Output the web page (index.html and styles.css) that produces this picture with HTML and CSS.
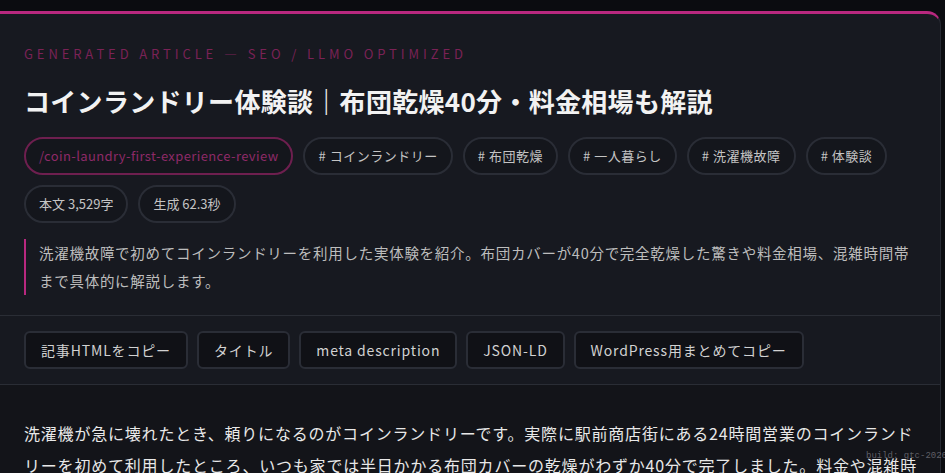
FILE: index.html
```html
<!DOCTYPE html>
<html lang="ja">
<head>
<meta charset="utf-8">
<title>Generated Article</title>
<link rel="stylesheet" href="styles.css">
</head>
<body>
<article class="card">
  <header class="head">
    <p class="eyebrow">GENERATED ARTICLE — SEO / LLMO OPTIMIZED</p>
    <h1 class="title">コインランドリー体験談｜布団乾燥40分・料金相場も解説</h1>
    <div class="chips">
      <span class="chip chip-slug">/coin-laundry-first-experience-review</span>
      <span class="chip"># コインランドリー</span>
      <span class="chip"># 布団乾燥</span>
      <span class="chip"># 一人暮らし</span>
      <span class="chip"># 洗濯機故障</span>
      <span class="chip"># 体験談</span>
      <span class="chip chip-stat">本文 3,529字</span>
      <span class="chip chip-stat">生成 62.3秒</span>
    </div>
    <p class="desc">洗濯機故障で初めてコインランドリーを利用した実体験を紹介。布団カバーが40分で完全乾燥した驚きや料金相場、混雑時間帯まで具体的に解説します。</p>
  </header>
  <div class="actions">
    <button class="btn">記事HTMLをコピー</button>
    <button class="btn">タイトル</button>
    <button class="btn">meta description</button>
    <button class="btn">JSON-LD</button>
    <button class="btn">WordPress用まとめてコピー</button>
  </div>
  <section class="body">
    <p>洗濯機が急に壊れたとき、頼りになるのがコインランドリーです。実際に駅前商店街にある24時間営業のコインランドリーを初めて利用したところ、いつも家では半日かかる布団カバーの乾燥がわずか40分で完了しました。料金や混雑時間帯についても詳しくまとめます。</p>
  </section>
</article>
<div class="build">build: gtc-2026-01</div>
</body>
</html>
```
FILE: styles.css
```css
* { box-sizing: border-box; }
html, body { margin: 0; padding: 0; }
body {
  background: #0b0c10;
  font-family: "Noto Sans CJK JP", "Noto Sans", sans-serif;
  color: #e6e6e6;
  width: 945px;
  height: 473px;
  overflow: hidden;
  position: relative;
}
.card {
  margin: 11px 4px 0 -20px;
  background: #171920;
  border: 1px solid #262932;
  border-top: 3px solid #b8287f;
  border-radius: 14px 14px 0 0;
}
.head {
  padding: 31px 23px 20px 43px;
}
.eyebrow {
  margin: 0;
  font-size: 13px;
  line-height: 18px;
  letter-spacing: 0.3em;
  color: #7a2256;
}
.title {
  margin: 20px 0 0;
  font-size: 26px;
  line-height: 36px;
  font-weight: 700;
  letter-spacing: 0.3px;
  color: #f2f2f2;
}
.chips {
  margin-top: 18px;
  display: flex;
  flex-wrap: wrap;
  gap: 10px;
}
.chip {
  display: inline-block;
  padding: 7px 13px;
  border: 2px solid #2a2d36;
  border-radius: 999px;
  background: #14161c;
  font-size: 13px;
  line-height: 20px;
  letter-spacing: 0.04em;
  color: #c4c4c4;
}
.chip-slug {
  border-color: #6e1f4f;
  color: #8e2a68;
  letter-spacing: 0.03em;
}
.chip-stat {
  letter-spacing: 0;
}
.desc {
  margin: 16px 0 0;
  padding-left: 13px;
  border-left: 2px solid #b8287f;
  font-size: 14.5px;
  line-height: 28px;
  letter-spacing: 0.05em;
  color: #bdbdbd;
}
.actions {
  display: flex;
  gap: 9px;
  padding: 15px 23px 15px 43px;
  border-top: 1px solid #2a2d35;
  border-bottom: 1px solid #2a2d35;
}
.btn {
  margin: 0;
  font-family: inherit;
  height: 38px;
  padding: 0 15px;
  background: #101116;
  border: 2px solid #2a2d36;
  border-radius: 6px;
  font-size: 14px;
  letter-spacing: 0.06em;
  color: #d2d2d2;
}
.body {
  background: #131419;
  padding: 32px 23px 0 43px;
}
.body p {
  margin: 0;
  font-size: 16px;
  line-height: 32px;
  letter-spacing: 0.05em;
  color: #e8e8e8;
}
.build {
  position: absolute;
  left: 866px;
  top: 450px;
  white-space: nowrap;
  font-family: "Liberation Mono", monospace;
  font-size: 9px;
  line-height: 12px;
  color: rgba(170, 170, 180, 0.5);
}
```
